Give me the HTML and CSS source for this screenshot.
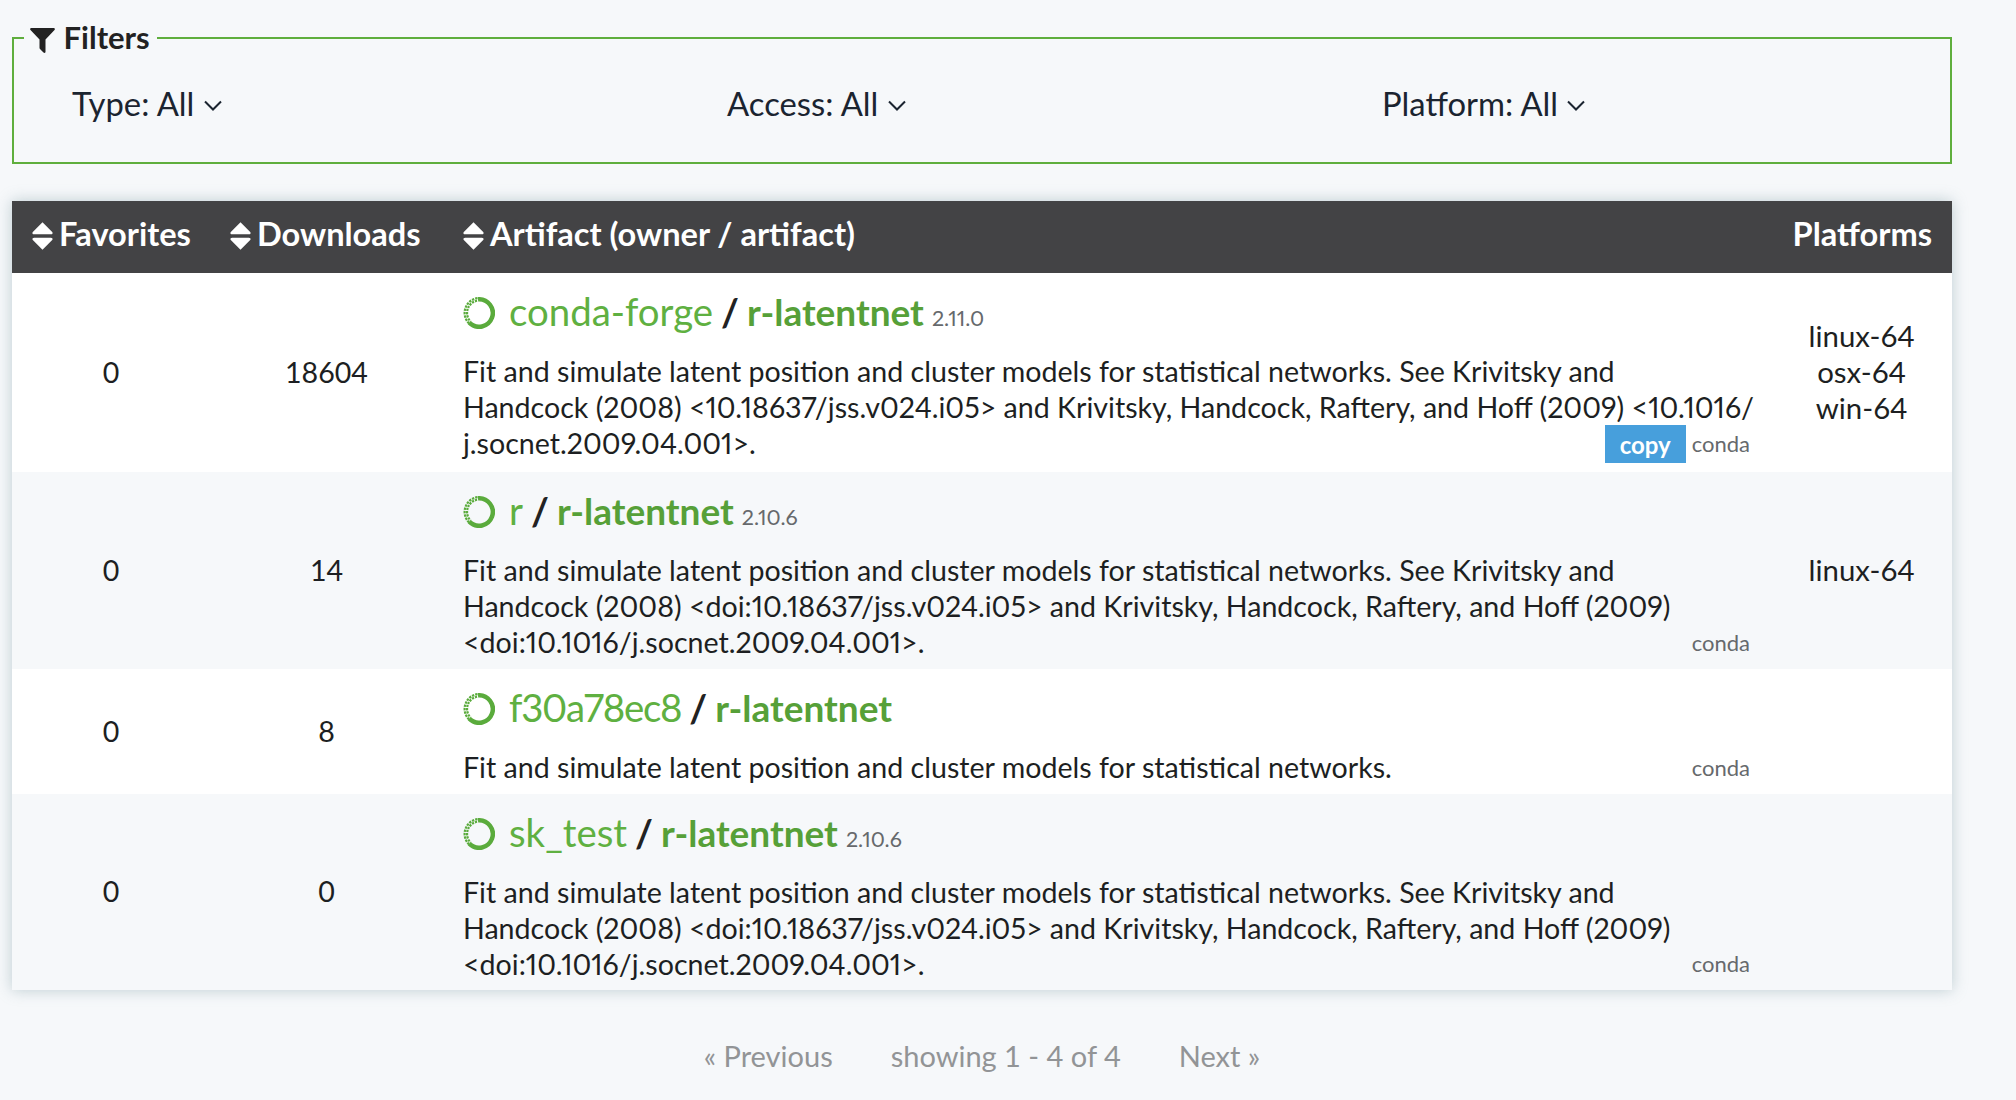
FILE: index.html
```html
<!DOCTYPE html>
<html lang="en">
<head>
    <meta charset="UTF-8">
    <title>r-latentnet</title>
    <link rel="stylesheet" href="styles.css">
</head>
<body>
    <svg class="defs">
        <symbol id="conda" viewBox="0 0 32 32">
            <path d="M15 2.3 A13.75 13.75 0 1 1 6.3 25.7" fill="none" stroke="#5aab3c" stroke-width="4.5"/>
            <path d="M6 26.5 A15 15 0 0 1 15 1" fill="none" stroke="#5aab3c" stroke-width="2.2" stroke-dasharray="2.4 1"/>
            <path d="M7.6 24.6 A12.4 12.4 0 0 1 15 3.6" fill="none" stroke="#5aab3c" stroke-width="2.2" stroke-dasharray="2.2 1" stroke-dashoffset="1.5"/>
        </symbol>
        <symbol id="sort" viewBox="0 0 19 25">
            <path d="M9.5 0 L18.5 9 Q19 11 17 11 L2 11 Q0 11 .5 9 Z M2 14 L17 14 Q19 14 18.5 16 L9.5 25 L.5 16 Q0 14 2 14 Z" fill="#fff"/>
        </symbol>
        <symbol id="chevron" viewBox="0 0 18 11">
            <path d="M1 1.5 L9 9.5 L17 1.5" fill="none" stroke="#1b2430" stroke-width="2"/>
        </symbol>
    </svg>

    <fieldset class="filters">
        <legend>
            <svg class="funnel" viewBox="0 0 25 25"><path d="M1 0 H24 Q25.500 .5 24.500 2 L15.500 11.500 V24 Q15 25.500 13.500 24.500 L10 21 Q9.500 20.500 9.500 19.500 V11.500 L.5 2 Q-.5 .5 1 0 Z" fill="#222"/></svg>
            Filters
        </legend>
        <div class="filter-row">
            <div class="filter">Type: All <svg class="chevron"><use href="#chevron"/></svg></div>
            <div class="filter">Access: All <svg class="chevron"><use href="#chevron"/></svg></div>
            <div class="filter">Platform: All <svg class="chevron"><use href="#chevron"/></svg></div>
        </div>
    </fieldset>

    <table class="results">
        <colgroup>
            <col class="col-fav">
            <col class="col-down">
            <col>
            <col class="col-plat">
        </colgroup>
        <thead>
            <tr>
                <th><svg class="sort"><use href="#sort"/></svg>Favorites</th>
                <th><svg class="sort"><use href="#sort"/></svg>Downloads</th>
                <th><svg class="sort"><use href="#sort"/></svg>Artifact (owner / artifact)</th>
                <th class="plat-head">Platforms</th>
            </tr>
        </thead>
        <tbody>
            <tr class="row-a row-first">
                <td class="num">0</td>
                <td class="num">18604</td>
                <td class="artifact">
                    <div class="title">
                        <svg class="conda"><use href="#conda"/></svg>
                        <a class="owner">conda-forge</a> <span class="slash">/</span> <a class="pkg">r-latentnet</a> <small>2.11.0</small>
                    </div>
                    <p>Fit and simulate latent position and cluster models for statistical networks. See Krivitsky and<br>Handcock (2008) &lt;10.18637/jss.v024.i05&gt; and Krivitsky, Handcock, Raftery, and Hoff (2009) &lt;10.1016/<br>j.socnet.2009.04.001&gt;.</p>
                    <div class="tags tags-copy"><button class="copy">copy</button><span>conda</span></div>
                </td>
                <td class="num plat">linux-64<br>osx-64<br>win-64</td>
            </tr>
            <tr class="row-b row-second">
                <td class="num">0</td>
                <td class="num">14</td>
                <td class="artifact">
                    <div class="title">
                        <svg class="conda"><use href="#conda"/></svg>
                        <a class="owner">r</a> <span class="slash">/</span> <a class="pkg">r-latentnet</a> <small>2.10.6</small>
                    </div>
                    <p>Fit and simulate latent position and cluster models for statistical networks. See Krivitsky and<br>Handcock (2008) &lt;doi:10.18637/jss.v024.i05&gt; and Krivitsky, Handcock, Raftery, and Hoff (2009)<br>&lt;doi:10.1016/j.socnet.2009.04.001&gt;.</p>
                    <div class="tags"><span>conda</span></div>
                </td>
                <td class="num plat">linux-64</td>
            </tr>
            <tr class="row-a row-third">
                <td class="num">0</td>
                <td class="num">8</td>
                <td class="artifact">
                    <div class="title">
                        <svg class="conda"><use href="#conda"/></svg>
                        <a class="owner owner-hash">f30a78ec8</a> <span class="slash">/</span> <a class="pkg">r-latentnet</a>
                    </div>
                    <p>Fit and simulate latent position and cluster models for statistical networks.</p>
                    <div class="tags"><span>conda</span></div>
                </td>
                <td class="num plat"></td>
            </tr>
            <tr class="row-b row-fourth">
                <td class="num">0</td>
                <td class="num">0</td>
                <td class="artifact">
                    <div class="title">
                        <svg class="conda"><use href="#conda"/></svg>
                        <a class="owner">sk_test</a> <span class="slash">/</span> <a class="pkg">r-latentnet</a> <small>2.10.6</small>
                    </div>
                    <p>Fit and simulate latent position and cluster models for statistical networks. See Krivitsky and<br>Handcock (2008) &lt;doi:10.18637/jss.v024.i05&gt; and Krivitsky, Handcock, Raftery, and Hoff (2009)<br>&lt;doi:10.1016/j.socnet.2009.04.001&gt;.</p>
                    <div class="tags"><span>conda</span></div>
                </td>
                <td class="num plat"></td>
            </tr>
        </tbody>
    </table>

    <div class="pager">
        <span>« Previous</span>
        <span>showing 1 - 4 of 4</span>
        <span>Next »</span>
    </div>
</body>
</html>
```
FILE: styles.css
```css
body {
    font-family: Lato, "Open Sans", sans-serif;
    font-size: 28.6px;
    line-height: 36px;
    color: #1d1f22;
    background-color: #f6f8fa;
    margin: 0;
    padding: 0 64px 0 12px;
    height: 1100px;
    overflow: hidden;
    box-sizing: border-box;
}
.defs {
    display: none;
}
.filters {
    margin: 22px 0 0;
    padding: 0 58px;
    height: 142px;
    border: 2px solid #5fae3d;
    box-sizing: border-box;
}
.filters legend {
    margin-left: -48px;
    padding: 0 7px 0 6px;
    font-size: 31px;
    font-weight: 700;
    line-height: 30px;
    color: #222;
}
.funnel {
    width: 25px;
    height: 25px;
    margin-right: 1px;
    vertical-align: -4px;
}
.filter-row {
    display: grid;
    grid-template-columns: 655px 655px 1fr;
    margin-top: 31px;
}
.filter {
    font-size: 32.8px;
    line-height: 40px;
    color: #1b2430;
}
.chevron {
    width: 18px;
    height: 11px;
    margin-left: 1px;
    vertical-align: 5px;
}
.results {
    width: 100%;
    margin-top: 37px;
    border-collapse: collapse;
    table-layout: fixed;
    box-shadow: 0 0 14px rgba(120, 150, 160, 0.45);
}
.col-fav {
    width: 198px;
}
.col-down {
    width: 233px;
}
.col-plat {
    width: 181px;
}
.results th {
    height: 65px;
    padding: 0 20px 7px;
    background-color: #434345;
    color: #fff;
    font-size: 32.6px;
    font-weight: 700;
    text-align: left;
    white-space: nowrap;
}
.results th.plat-head {
    text-align: right;
}
.sort {
    width: 21px;
    height: 28px;
    margin-right: 6px;
    vertical-align: -4px;
}
.results td {
    padding: 0;
}
.results td.num {
    padding-bottom: 2px;
}
.row-a {
    background-color: #fff;
}
.row-b {
    background-color: #f6f8fa;
}
.row-first {
    height: 199px;
}
.row-second {
    height: 197px;
}
.row-third {
    height: 125px;
}
.row-fourth {
    height: 196px;
}
.num {
    text-align: center;
}
.results .plat {
    font-size: 29.4px;
}
.results td.artifact {
    position: relative;
    padding: 0 20px 8px;
    vertical-align: top;
    font-variant-numeric: proportional-nums;
}
.title {
    display: flex;
    align-items: baseline;
    gap: 8px;
    margin-top: 16px;
    height: 44px;
    font-size: 38.4px;
    line-height: 44px;
    white-space: nowrap;
}
.conda {
    width: 32px;
    height: 32px;
    align-self: center;
    margin-top: 4px;
    margin-right: 6px;
}
.owner {
    color: #5fb041;
}
.owner-hash {
    letter-spacing: -1.3px;
}
.slash {
    color: #222;
    font-weight: 700;
}
.pkg {
    color: #56a038;
    font-size: 37px;
    font-weight: 700;
}
.title small {
    font-size: 21.5px;
    line-height: 1;
    color: #66696c;
}
.artifact p {
    margin: 20px 0 0;
    white-space: nowrap;
}
.tags {
    position: absolute;
    right: 21px;
    bottom: 11px;
    display: flex;
    align-items: center;
    gap: 6px;
    font-size: 22px;
    line-height: 30px;
    color: #66696c;
}
.tags-copy {
    bottom: 9px;
}
.copy {
    width: 81px;
    height: 38px;
    padding: 0;
    border: none;
    background-color: #479fdc;
    color: #fff;
    font-family: inherit;
    font-size: 24px;
    font-weight: 700;
}
.pager {
    display: flex;
    justify-content: center;
    gap: 58px;
    margin-top: 48px;
    font-size: 29px;
    color: #929496;
}
```
